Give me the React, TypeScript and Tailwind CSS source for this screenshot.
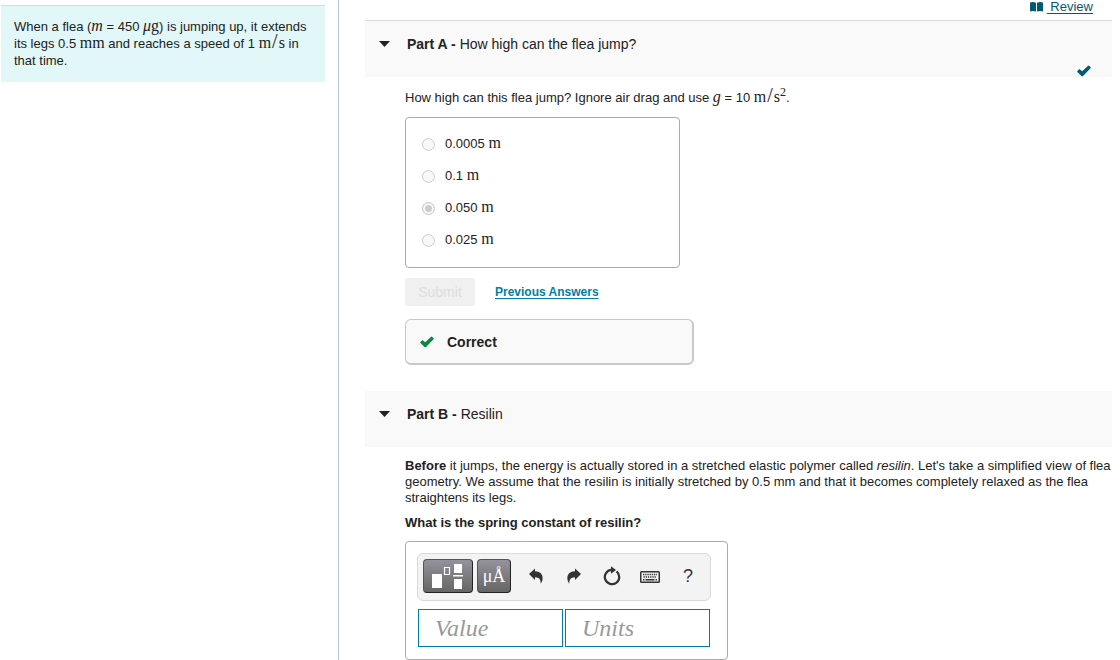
import type { ReactNode } from "react";

const answers = [
  { value: "0.0005", checked: false },
  { value: "0.1", checked: false },
  { value: "0.050", checked: true },
  { value: "0.025", checked: false },
];

const toolButton =
  "flex h-[34px] shrink-0 items-center justify-center rounded border border-[#555] border-r-[#222] border-b-[#222] bg-linear-to-b from-[#94929b] to-[#666] text-white";
const iconButton = "flex h-8 w-[38px] shrink-0 items-center justify-center text-[#333]";
const field =
  "h-[38px] min-w-0 flex-1 border border-[#007fa3] bg-white px-4 font-['Liberation_Serif',serif] text-2xl italic placeholder:text-[#999]";

function Math({ children, italic = false }: { children: ReactNode; italic?: boolean }) {
  return (
    <span className={`font-['Liberation_Serif',serif] text-base leading-[0] ${italic ? "italic" : ""}`}>
      {children}
    </span>
  );
}

function MetersPerSecond() {
  return (
    <Math>
      m<span className="mx-px text-xl leading-[0]">/</span>s
    </Math>
  );
}

function Check({ className }: { className: string }) {
  return (
    <svg viewBox="0 0 14 12" className={className} fill="currentColor" aria-hidden="true">
      <path d="M0 6.6 2.4 4.1 5.2 6.3 11.1 0.8 Q11.7 0.3 12.3 0.9L14 2.7 6 11 Q5.2 11.7 4.4 11Z" />
    </svg>
  );
}

function PartHeader({ part, title, children }: { part: string; title: string; children?: ReactNode }) {
  return (
    <header className="flex h-14 items-start justify-between bg-[#f9f9f9] pt-[13px] pr-[21px] pl-3.5">
      <button type="button" aria-expanded="true" className="flex items-center gap-[17px] text-sm leading-5">
        <svg viewBox="0 0 11 6" className="h-1.5 w-[11px]" fill="#222" aria-hidden="true">
          <path d="M0 0h11L5.5 6z" />
        </svg>
        <span>
          <b>{part} - </b>
          {title}
        </span>
      </button>
      {children}
    </header>
  );
}

function Toolbar() {
  return (
    <div className="flex h-12 items-center rounded-md border border-[#dadada] bg-[#f3f3f3] pb-0.5 pl-[5px]">
      <button type="button" aria-label="Templates" className={`${toolButton} mr-1 w-[50px]`}>
        <svg viewBox="0 0 32 28" className="h-7 w-8" fill="#fff" aria-hidden="true">
          <path d="M0 12h10v14H0zM22 2h8v9h-8zM22 17h8v10h-8zM21 13h10v1.5H21z" />
          <path d="M12.5 5.5h5v7h-5z" fill="none" stroke="#fff" strokeWidth="1.2" />
        </svg>
      </button>
      <button
        type="button"
        aria-label="Symbols"
        className={`${toolButton} w-[34px] font-['Liberation_Serif',serif] text-lg leading-none`}
      >
        μÅ
      </button>
      <div className="ml-1.5 flex">
        <button type="button" aria-label="Undo" className={iconButton}>
          <svg viewBox="0 0 14 16" className="h-4 w-3.5" fill="currentColor" aria-hidden="true">
            <path d="M0 6 6 0.4V3.3C11 3.3 14 6.2 13.6 11 13.4 13 12.6 14.6 11.6 15.7 12 11.8 10.4 9.4 6 9.2V12Z" />
          </svg>
        </button>
        <button type="button" aria-label="Redo" className={iconButton}>
          <svg viewBox="0 0 14 16" className="h-4 w-3.5" fill="currentColor" aria-hidden="true">
            <path d="M14 6 8 0.4V3.3C3 3.3 0 6.2 0.4 11 0.6 13 1.4 14.6 2.4 15.7 2 11.8 3.6 9.4 8 9.2V12Z" />
          </svg>
        </button>
        <button type="button" aria-label="Reset" className={iconButton}>
          <svg viewBox="0 0 18 20" className="h-5 w-[18px]" aria-hidden="true">
            <path d="M13.6 5.4A7.2 7.2 0 1 1 8.5 3.8" fill="none" stroke="currentColor" strokeWidth="2.2" />
            <path d="M8 0.2 13 4 8 7.8Z" fill="currentColor" />
          </svg>
        </button>
        <button type="button" aria-label="Keyboard shortcuts" className={iconButton}>
          <svg viewBox="0 0 20 12" className="mt-0.5 h-3 w-5" aria-hidden="true">
            <rect x="0.75" y="0.75" width="18.5" height="10.5" rx="0.8" fill="none" stroke="currentColor" strokeWidth="1.5" />
            <path d="M3 3.5h14M3.5 6h13" stroke="currentColor" strokeWidth="1.4" strokeDasharray="1.3 0.9" />
            <path d="M3 8.7h1.5M5.5 8.7h9M15.5 8.7H17" stroke="currentColor" strokeWidth="1.4" />
          </svg>
        </button>
        <button type="button" aria-label="Help" className={`${iconButton} text-lg`}>
          ?
        </button>
      </div>
    </div>
  );
}

export default function App() {
  return (
    <div className="flex h-screen overflow-hidden bg-white font-['Liberation_Sans',Arial,sans-serif] text-[13px] leading-4 text-[#222]">
      <aside className="w-[339px] shrink-0 border-r border-[#b4c5d9] pt-[5px] pr-[13px] pl-px">
        <p className="border-t border-[#d5dadb] bg-[#e1f7f8] px-[13px] pt-3 pb-[13px] leading-[17px]">
          When a flea (<Math italic>m</Math> = 450 <Math italic>μ</Math>
          <Math>g</Math>) is jumping up, it extends its legs 0.5 <Math>mm</Math> and reaches a speed of 1{" "}
          <MetersPerSecond /> in that time.
        </p>
      </aside>

      <main className="min-w-0 flex-1 pr-2 pl-[26px]">
        <div className="flex h-5 items-start justify-end pr-[19px]">
          <a href="#review" className="flex items-center gap-1 leading-[14px] text-[#005a70]">
            <svg viewBox="0 0 13 10" className="h-2.5 w-[13px]" fill="currentColor" aria-hidden="true">
              <path d="M0 0.5Q3 -0.4 6 0.7V9.6Q3 8.6 0 9.4ZM7 0.7Q10 -0.4 13 0.5V9.4Q10 8.6 7 9.6Z" />
            </svg>
            <span className="whitespace-pre underline underline-offset-2"> Review</span>
          </a>
        </div>

        <section className="border-t border-[#d9d9d9]">
          <PartHeader part="Part A" title="How high can the flea jump?">
            <Check className="mt-[31px] h-3 w-3.5 text-[#005a70]" />
          </PartHeader>

          <div className="pl-10">
            <p className="pt-[13px]">
              How high can this flea jump? Ignore air drag and use <Math italic>g</Math> = 10 <MetersPerSecond />
              <sup className="font-['Liberation_Serif',serif] text-xs leading-[0]">2</sup>.
            </p>

            <fieldset className="mt-[11px] flex w-[275px] flex-col gap-4 rounded border border-[#aaa] px-4 pt-[18px] pb-[19px]">
              {answers.map((a) => (
                <label key={a.value} className="flex h-4 items-center gap-2.5">
                  <input
                    type="radio"
                    name="height"
                    disabled
                    defaultChecked={a.checked}
                    className="size-[13px] appearance-none rounded-full border border-[#ccc] bg-[#f8f8f8] checked:bg-[#ccc] checked:shadow-[inset_0_0_0_2px_#f8f8f8]"
                  />
                  <span>
                    {a.value} <Math>m</Math>
                  </span>
                </label>
              ))}
            </fieldset>

            <div className="mt-2.5 flex items-center gap-5">
              <button type="button" disabled className="h-7 w-[70px] rounded-xs bg-[#f0f0f0] text-sm text-[#ddd]">
                Submit
              </button>
              <a href="#previous" className="text-xs font-bold text-[#007fa3] underline underline-offset-2">
                Previous Answers
              </a>
            </div>

            <div className="mt-[13px] flex h-[46px] w-[289px] items-center gap-[13px] rounded-md border border-r-2 border-b-2 border-[#c8c8c8] bg-[#f9f9f9] pl-3.5 text-sm font-bold">
              <Check className="h-3 w-3.5 text-[#048a3c]" />
              Correct
            </div>
          </div>
        </section>

        <section className="mt-[26px]">
          <PartHeader part="Part B" title="Resilin" />

          <div className="pt-[11px] pl-10">
            <p>
              <b>Before</b> it jumps, the energy is actually stored in a stretched elastic polymer called{" "}
              <i>resilin</i>. Let's take a simplified view of flea geometry. We assume that the resilin is initially
              stretched by 0.5 mm and that it becomes completely relaxed as the flea straightens its legs.
            </p>
            <p className="mt-[9px] font-bold">What is the spring constant of resilin?</p>

            <div className="mt-2.5 w-[323px] rounded border border-[#aaa] pt-[11px] pr-4 pb-3 pl-[11px]">
              <Toolbar />
              <div className="mt-2 flex gap-0.5 px-px">
                <input type="text" aria-label="Value" placeholder="Value" className={field} />
                <input type="text" aria-label="Units" placeholder="Units" className={field} />
              </div>
            </div>
          </div>
        </section>
      </main>
    </div>
  );
}
